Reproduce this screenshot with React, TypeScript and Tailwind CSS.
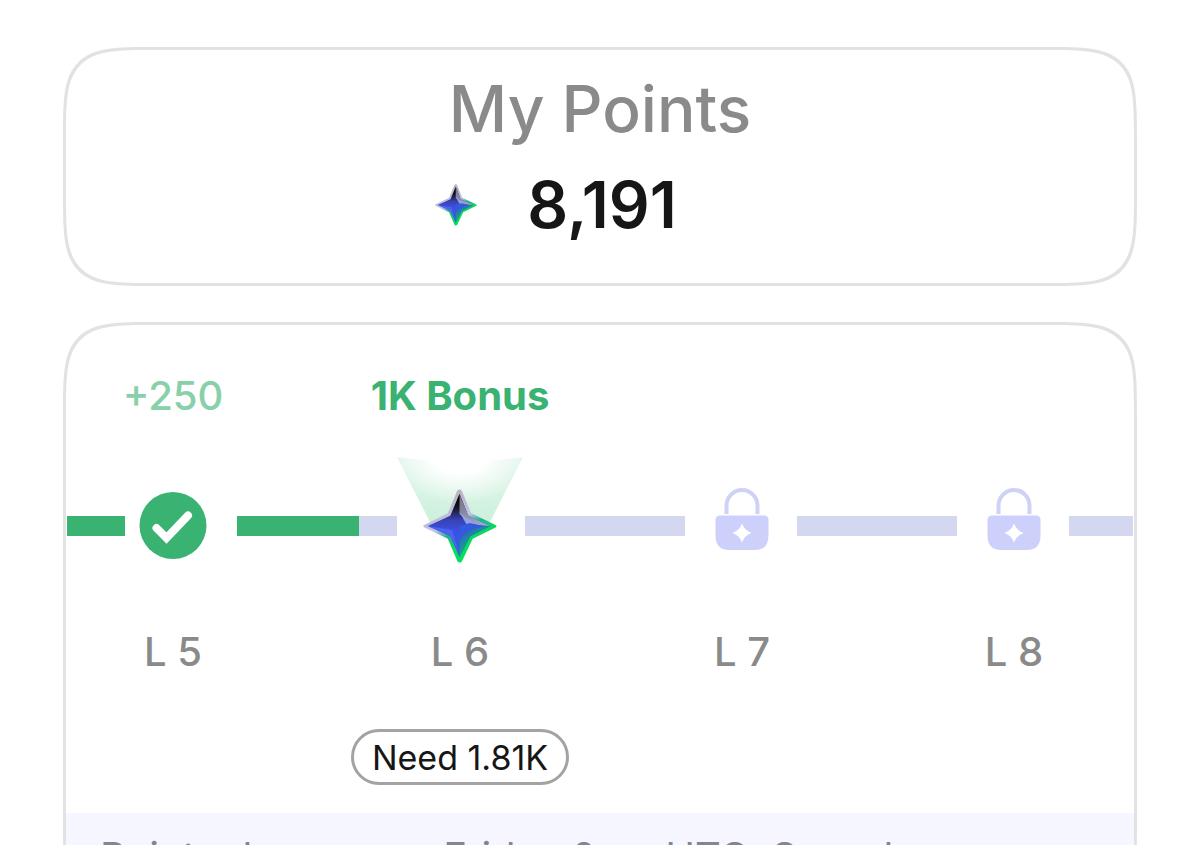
import type { ReactNode } from 'react';
import clsx from 'clsx';

function GemStar({ id, className }: { id: string; className?: string }) {
  const base = `${id}-base`;
  const rim = `${id}-rim`;
  const face = `${id}-face`;
  const south = `${id}-south`;
  return (
    <svg viewBox="0 0 76 76" className={className} aria-hidden="true">
      <defs>
        <linearGradient id={rim} x1="0.3" y1="0.1" x2="0.7" y2="0.9">
          <stop offset="0" stopColor="#b9b4bd" />
          <stop offset="0.4" stopColor="#c3c2ea" />
          <stop offset="0.56" stopColor="#1fb58a" />
          <stop offset="0.75" stopColor="#06dc5c" />
          <stop offset="1" stopColor="#08e05c" />
        </linearGradient>
        <linearGradient id={base} x1="0" y1="0" x2="0" y2="1">
          <stop offset="0" stopColor="#000000" />
          <stop offset="0.2" stopColor="#12101c" />
          <stop offset="0.42" stopColor="#3a44b8" />
          <stop offset="0.6" stopColor="#3b50e6" />
          <stop offset="1" stopColor="#2b62d8" />
        </linearGradient>
        <linearGradient id={face} x1="0" y1="0" x2="1" y2="1">
          <stop offset="0" stopColor="#77727f" />
          <stop offset="1" stopColor="#9fb4dc" />
        </linearGradient>
        <linearGradient id={south} x1="0.1" y1="0" x2="0.7" y2="0.8">
          <stop offset="0" stopColor="#3450cf" />
          <stop offset="1" stopColor="#08cf66" />
        </linearGradient>
      </defs>
      <path
        d="M37.5 0.5C39 0.5 39.8 1.6 40.4 3L49.5 25L74 36.6C76 37.5 76 38.8 74 39.7L51 51L40.4 73.4C39 76.2 36.4 76.2 35 73.4L25.5 51L1.6 39.6C-0.2 38.8 -0.2 37.4 1.6 36.6L25.5 25L34.6 3C35.2 1.6 36 0.5 37.5 0.5Z"
        fill={`url(#${rim})`}
      />
      <path d="M37.5 5L46.5 27.5L69 38L48.5 48.5L37.5 70L28 48.5L5 38L28 27.5Z" fill={`url(#${base})`} />
      <path d="M37.5 5L46.5 27.5L69 38L54 37L44 30L37.5 26Z" fill={`url(#${face})`} />
      <path d="M37.5 24L44 29L58 38L46 38.5Z" fill="#94a2df" />
      <path d="M37.5 38L46 38.5L69 38L48.5 48.5L37.5 70Z" fill={`url(#${south})`} />
      <path d="M37.5 38L48 35L62 38L47 43L37.5 52Z" fill="#3559dc" />
      <path d="M5 38L30 42L37.5 68L28 48.5Z" fill="#4b63ee" />
    </svg>
  );
}

function CheckBadge() {
  return (
    <svg viewBox="0 0 68 68" className="size-[68px]" role="img" aria-label="Completed">
      <circle cx="34" cy="33.5" r="33.5" fill="#39b272" />
      <path d="M17.5 36L27.5 46L49 23.5" fill="none" stroke="#ffffff" strokeWidth="8" strokeLinecap="round" />
    </svg>
  );
}

function Lock() {
  return (
    <svg viewBox="0 0 54 76" className="h-[76px] w-[54px]" role="img" aria-label="Locked">
      <path d="M11.5 26V17.5a15.5 15.5 0 0 1 31 0V26" fill="none" stroke="#ced2f6" strokeWidth="4" />
      <path d="M5 27.5H49Q53.5 27.5 53.5 32V47Q53.5 62 40 62H14Q0.5 62 0.5 47V32Q0.5 27.5 5 27.5Z" fill="#ccd0fb" />
      <path d="M27 35.5Q29.5 42.500 36.5 45Q29.5 47.500 27 54.500Q24.5 47.500 17.5 45Q24.5 42.500 27 35.5Z" fill="#ffffff" />
    </svg>
  );
}

function Beam() {
  return (
    <svg viewBox="0 0 126 80" className="absolute top-9 h-20 w-[126px]" aria-hidden="true">
      <defs>
        <linearGradient id="beam" x1="0" y1="0" x2="0" y2="1">
          <stop offset="0" stopColor="#dff5e9" />
          <stop offset="0.55" stopColor="#d6f3e3" />
          <stop offset="1" stopColor="#cdf0dc" />
        </linearGradient>
        <radialGradient id="glow" cx="63" cy="0" r="60" gradientUnits="userSpaceOnUse" gradientTransform="matrix(1.2 0 0 0.8 -12.6 0)">
          <stop offset="0.35" stopColor="#ffffff" />
          <stop offset="1" stopColor="#ffffff" stopOpacity="0" />
        </radialGradient>
      </defs>
      <path d="M0 1Q63 10 126 1L93 66H33Z" fill="url(#beam)" />
      <path d="M0 0H126L93 66H33Z" fill="url(#glow)" />
    </svg>
  );
}

function Track({ progress = 0 }: { progress?: number }) {
  return (
    <div className="row-start-2 h-5 self-center bg-[#d4d7f0]">
      <div className="h-full bg-[#39b272]" style={{ width: `${progress}%` }} />
    </div>
  );
}

interface LevelProps {
  name: string;
  icon: ReactNode;
  bonus?: string;
  current?: boolean;
  need?: string;
  className?: string;
}

function Level({ name, icon, bonus, current, need, className }: LevelProps) {
  return (
    <div className={clsx('row-span-4 row-start-1 grid grid-rows-subgrid justify-items-center whitespace-nowrap', className)}>
      <div
        className={clsx(
          'flex w-0 justify-center text-[40px] leading-[48px]',
          current ? 'font-bold text-[#39b272]' : 'font-medium text-[#88d0aa]',
        )}
      >
        {bonus}
      </div>
      <div className="relative flex items-center justify-center">{icon}</div>
      <div className="text-[40px] leading-10 font-medium text-[#8a8a8a]">{name}</div>
      <div className="flex w-0 items-end justify-center">
        {need && (
          <span className="h-14 rounded-full border-3 border-[#a3a3a3] px-[18px] text-[34px] leading-[52px] text-[#161616]">
            {need}
          </span>
        )}
      </div>
    </div>
  );
}

export default function App() {
  return (
    <main className="min-h-screen bg-white px-[63px] pt-[47px] font-[Inter,sans-serif]">
      {/* Balance */}
      <section className="rounded-[54px] border-3 border-[#e2e2e2] pt-[19px] pb-[38px] supports-[corner-shape:squircle]:rounded-[96px] supports-[corner-shape:squircle]:[corner-shape:squircle]">
        <h1 className="text-center text-[64px] leading-20 font-medium text-[#8a8a8a]">My Points</h1>
        <div className="mt-4 flex items-center justify-center gap-[50px] pr-22">
          <GemStar id="balance" className="size-[42px]" />
          <span className="text-[64px] leading-20 font-semibold text-[#161616]">8,191</span>
        </div>
      </section>

      {/* Levels */}
      <section className="mt-9 overflow-hidden rounded-[54px] border-3 border-[#e2e2e2] supports-[corner-shape:squircle]:rounded-[96px] supports-[corner-shape:squircle]:[corner-shape:squircle]">
        <div className="grid grid-cols-[58px_112px_1fr_128px_1fr_112px_1fr_112px_64px] grid-rows-[48px_212px_40px_113px] px-px pt-[47px] pb-7">
          <Track progress={100} />
          <Level name="L 5" bonus="+250" icon={<CheckBadge />} className="pr-4" />
          <Track progress={76} />
          <Level
            name="L 6"
            bonus="1K Bonus"
            need="Need 1.81K"
            current
            className="pr-0.5"
            icon={
              <>
                <Beam />
                <GemStar id="level" className="relative size-[74px]" />
              </>
            }
          />
          <Track />
          <Level name="L 7" icon={<Lock />} className="pl-0.5" />
          <Track />
          <Level name="L 8" icon={<Lock />} className="pl-0.5" />
          <Track />
        </div>
        <p className="bg-[#f5f6ff] px-[34px] pt-5 pb-8 text-[40px] leading-[48px] text-[#85858f]">
          Points drop every Friday 0am UTC. Spend
        </p>
      </section>
    </main>
  );
}
